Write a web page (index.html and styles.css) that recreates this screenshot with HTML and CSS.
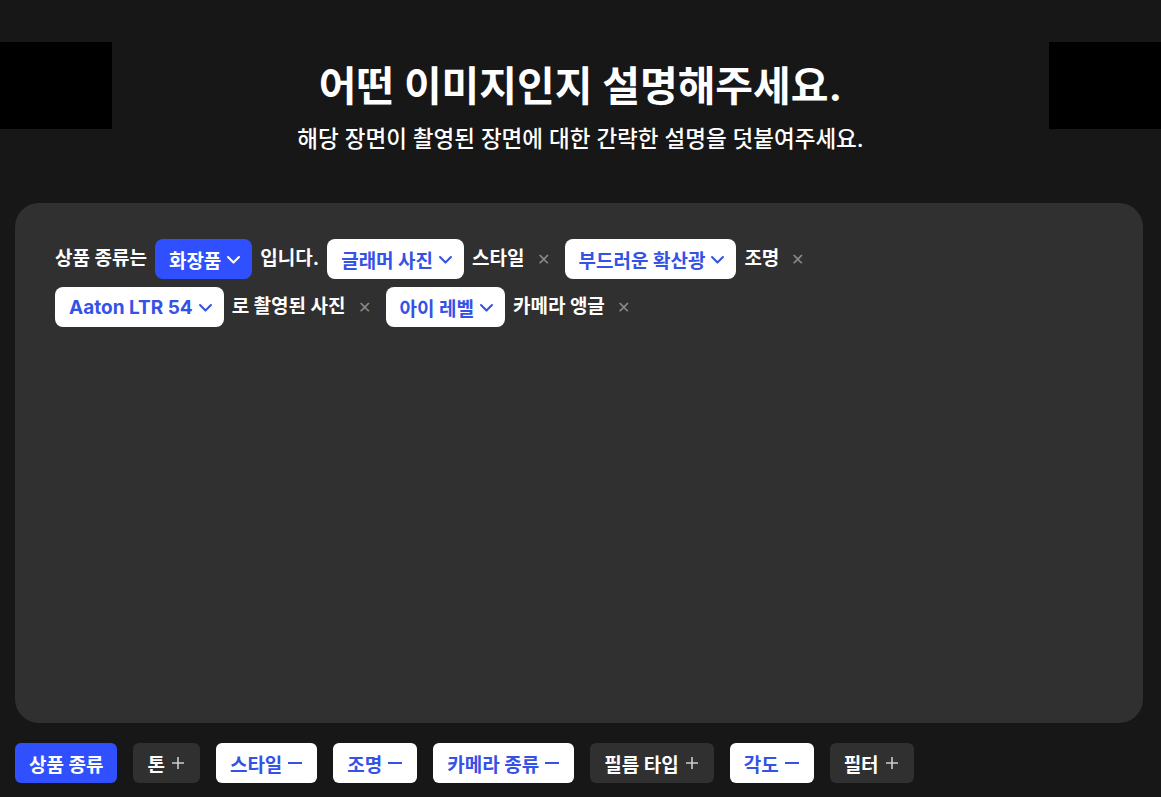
FILE: index.html
```html
<!DOCTYPE html>
<html lang="ko">
<head>
    <meta charset="UTF-8">
    <meta name="viewport" content="width=device-width, initial-scale=1.0">
    <title>이미지 설명</title>
    <link rel="stylesheet" href="styles.css">
</head>
<body>
    <div class="header">
        <div class="side-box"></div>
        <div class="heading">
            <h1>어떤 이미지인지 설명해주세요.</h1>
            <p>해당 장면이 촬영된 장면에 대한 간략한 설명을 덧붙여주세요.</p>
        </div>
        <div class="side-box"></div>
    </div>

    <div class="prompt-box">
        <div class="sentence">
            <span class="word">상품 종류는</span>
            <button class="chip chip-blue">화장품 <svg class="chevron" viewBox="0 0 14 14"><path d="M2.5 5 L7 9.5 L11.5 5"/></svg></button>
            <span class="word">입니다.</span>

            <button class="chip">글래머 사진 <svg class="chevron" viewBox="0 0 14 14"><path d="M2.5 5 L7 9.5 L11.5 5"/></svg></button>
            <span class="word">스타일</span>
            <span class="remove">&#x2715;</span>

            <button class="chip">부드러운 확산광 <svg class="chevron" viewBox="0 0 14 14"><path d="M2.5 5 L7 9.5 L11.5 5"/></svg></button>
            <span class="word">조명</span>
            <span class="remove">&#x2715;</span>

            <button class="chip">Aaton LTR 54 <svg class="chevron" viewBox="0 0 14 14"><path d="M2.5 5 L7 9.5 L11.5 5"/></svg></button>
            <span class="word">로 촬영된 사진</span>
            <span class="remove">&#x2715;</span>

            <button class="chip">아이 레벨 <svg class="chevron" viewBox="0 0 14 14"><path d="M2.5 5 L7 9.5 L11.5 5"/></svg></button>
            <span class="word">카메라 앵글</span>
            <span class="remove">&#x2715;</span>
        </div>
    </div>

    <div class="options">
        <button class="option option-active">상품 종류</button>
        <button class="option">톤 <svg class="sign" viewBox="0 0 16 16"><path d="M8 2 V14 M2 8 H14"/></svg></button>
        <button class="option option-on">스타일 <svg class="sign" viewBox="0 0 16 16"><path d="M1 8 H15"/></svg></button>
        <button class="option option-on">조명 <svg class="sign" viewBox="0 0 16 16"><path d="M1 8 H15"/></svg></button>
        <button class="option option-on">카메라 종류 <svg class="sign" viewBox="0 0 16 16"><path d="M1 8 H15"/></svg></button>
        <button class="option">필름 타입 <svg class="sign" viewBox="0 0 16 16"><path d="M8 2 V14 M2 8 H14"/></svg></button>
        <button class="option option-on">각도 <svg class="sign" viewBox="0 0 16 16"><path d="M1 8 H15"/></svg></button>
        <button class="option">필터 <svg class="sign" viewBox="0 0 16 16"><path d="M8 2 V14 M2 8 H14"/></svg></button>
    </div>
</body>
</html>
```

FILE: styles.css
```css
body {
    margin: 0;
    background-color: #171717;
    color: #fff;
    font-family: "Inter", "Noto Sans CJK KR", sans-serif;
}

.header {
    display: flex;
    align-items: flex-start;
    height: 203px;
}

.side-box {
    width: 112px;
    height: 87px;
    margin-top: 42px;
    background-color: #000;
}

.heading {
    flex: 1;
    text-align: center;
    padding-top: 58px;
}

.heading h1 {
    margin: 0;
    font-size: 41px;
    font-weight: 700;
    line-height: 56px;
}

.heading p {
    margin: 10px 0 0;
    font-size: 22.5px;
    font-weight: 500;
    line-height: 30px;
}

.prompt-box {
    margin: 0 18px 0 15px;
    height: 520px;
    box-sizing: border-box;
    padding: 36px 40px;
    background-color: #303030;
    border-radius: 24px;
}

.sentence {
    display: flex;
    flex-wrap: wrap;
    align-items: center;
    gap: 8px;
    max-width: 800px;
}

.word {
    font-size: 19px;
    font-weight: 700;
    line-height: 40px;
}

.remove {
    color: #8a8a8a;
    font-size: 16px;
    margin: 0 7px 0 4px;
    line-height: 40px;
}

.chip {
    display: flex;
    align-items: center;
    gap: 4px;
    height: 40px;
    padding: 0 10px 0 14px;
    border: none;
    border-radius: 8px;
    background-color: #fff;
    color: #3452e6;
    font-family: inherit;
    font-size: 19px;
    font-weight: 700;
    cursor: pointer;
}

.chip-blue {
    background-color: #3050ff;
    color: #fff;
}

.chevron {
    width: 17px;
    height: 17px;
    fill: none;
    stroke: currentColor;
    stroke-width: 1.7;
    stroke-linecap: round;
    stroke-linejoin: round;
}

.options {
    display: flex;
    gap: 16px;
    padding: 20px 15px 0;
}

.option {
    display: flex;
    align-items: center;
    gap: 5px;
    height: 40px;
    padding: 0 14px;
    border: none;
    border-radius: 6px;
    background-color: #303030;
    color: #fff;
    font-family: inherit;
    font-size: 19px;
    font-weight: 700;
    cursor: pointer;
}

.option .sign {
    width: 16px;
    height: 16px;
    fill: none;
    stroke: #ccc;
    stroke-width: 1.6;
}

.option-on {
    background-color: #fff;
    color: #3452e6;
}

.option-on .sign {
    stroke: #3452e6;
    stroke-width: 2;
}

.option-active {
    background-color: #3050ff;
    color: #fff;
}
```
